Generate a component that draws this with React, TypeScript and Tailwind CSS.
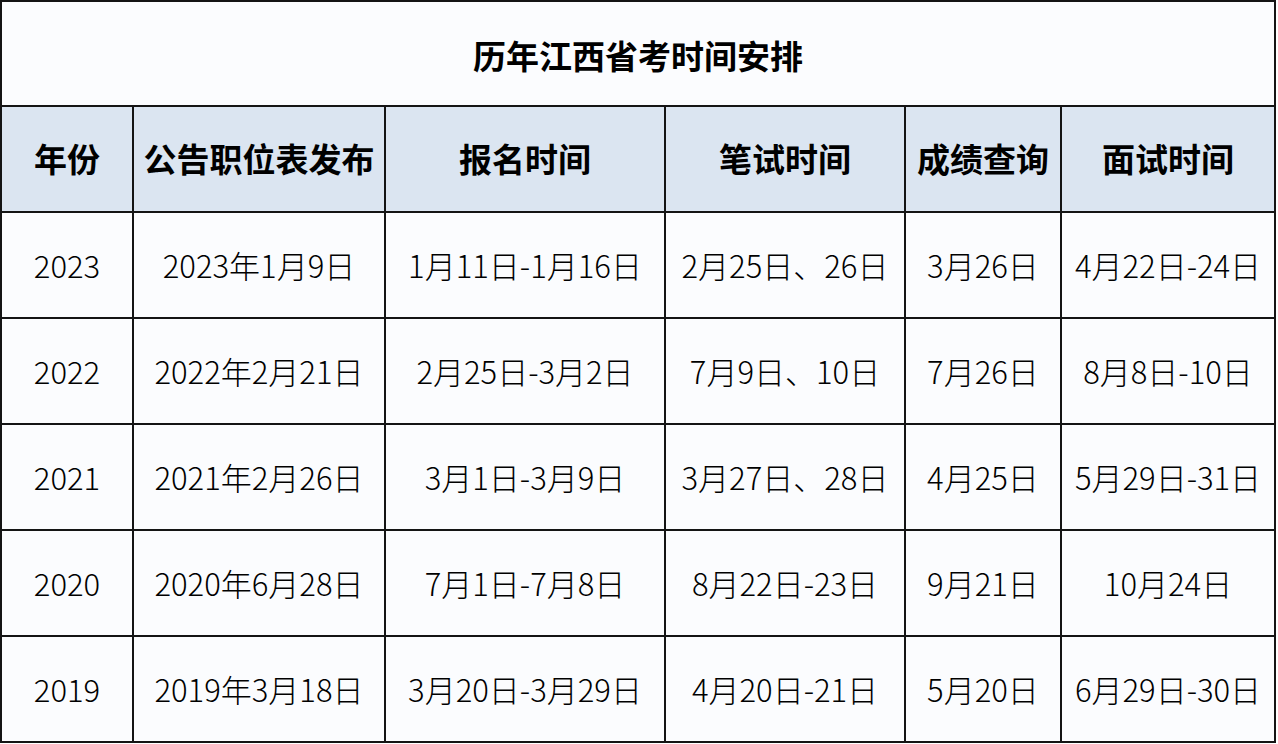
const headers = ["年份", "公告职位表发布", "报名时间", "笔试时间", "成绩查询", "面试时间"];

const rows = [
  ["2023", "2023年1月9日", "1月11日-1月16日", "2月25日、26日", "3月26日", "4月22日-24日"],
  ["2022", "2022年2月21日", "2月25日-3月2日", "7月9日、10日", "7月26日", "8月8日-10日"],
  ["2021", "2021年2月26日", "3月1日-3月9日", "3月27日、28日", "4月25日", "5月29日-31日"],
  ["2020", "2020年6月28日", "7月1日-7月8日", "8月22日-23日", "9月21日", "10月24日"],
  ["2019", "2019年3月18日", "3月20日-3月29日", "4月20日-21日", "5月20日", "6月29日-30日"],
];

const cell = "flex items-center justify-center border-r-2 border-b-2 border-[#141414] whitespace-nowrap";

export default function App() {
  return (
    <div className="w-[1278px] h-[744px] bg-white font-['Noto_Sans_CJK_SC','Noto_Sans',sans-serif] text-black">
      <div className="w-[1276px] border-l-2 border-t-2 border-[#141414] grid grid-cols-[132px_252px_280px_240px_156px_214px] grid-rows-[105px_106px_repeat(5,106px)]">
        <div className={`${cell} col-span-6 bg-[#fbfcfe] text-[33px] font-bold pt-1`}>
          历年江西省考时间安排
        </div>
        {headers.map((h) => (
          <div key={h} className={`${cell} bg-[#dbe5f1] text-[33px] font-bold`}>
            {h}
          </div>
        ))}
        {rows.map((r) =>
          r.map((v, i) => (
            <div key={r[0] + i} className={`${cell} bg-[#fbfcfe] text-[31px] font-light`}>
              {v}
            </div>
          ))
        )}
      </div>
    </div>
  );
}
